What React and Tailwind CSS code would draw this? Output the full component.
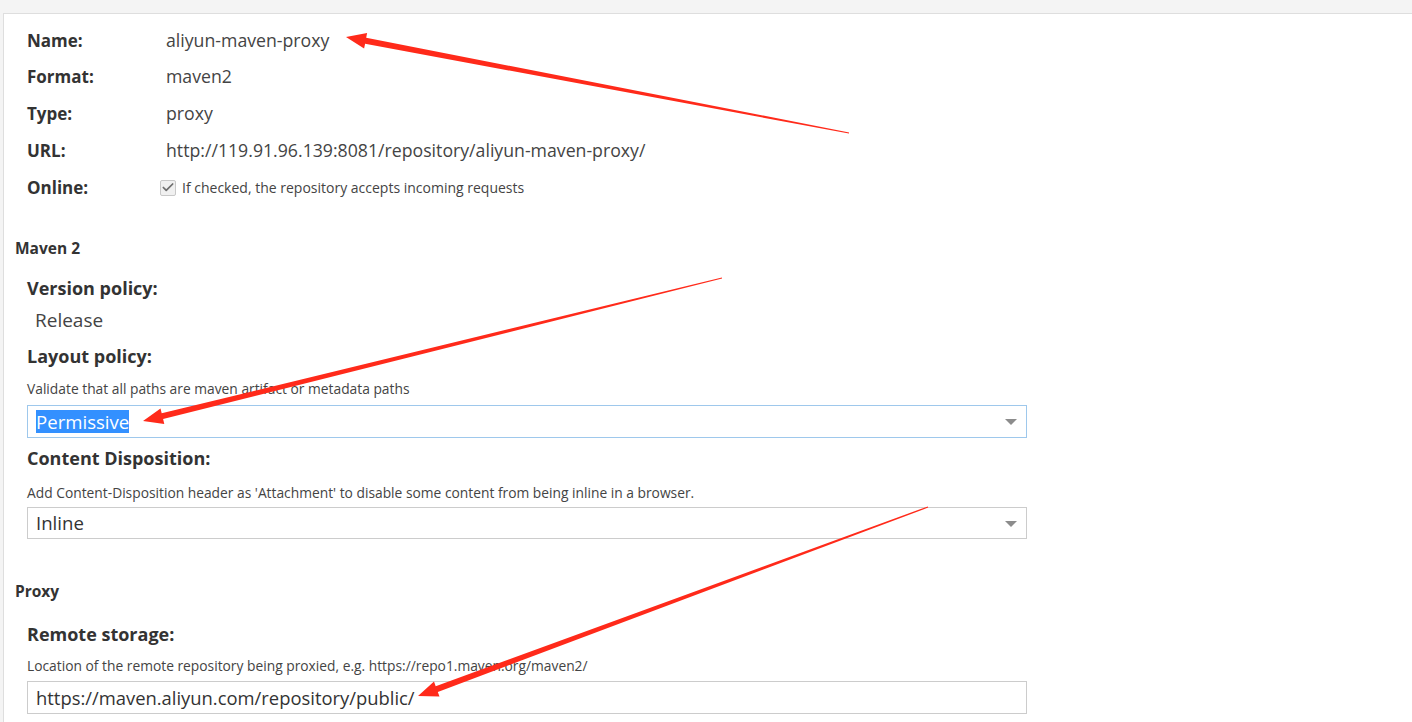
import { Check } from 'lucide-react';

const font = { fontFamily: '"Open Sans", Lato, sans-serif' };

// tapered arrow polygon, tail -> head
function arrowPoints(tx, ty, hx, hy) {
  const len = Math.hypot(hx - tx, hy - ty);
  const dx = (hx - tx) / len;
  const dy = (hy - ty) / len;
  const nx = -dy;
  const ny = dx;
  const headLen = 20;
  const bx = hx - dx * headLen;
  const by = hy - dy * headLen;
  const p = (x, y) => `${x.toFixed(1)},${y.toFixed(1)}`;
  return [
    p(tx + nx * 0.6, ty + ny * 0.6),
    p(bx + nx * 3, by + ny * 3),
    p(bx + nx * 8, by + ny * 8),
    p(hx, hy),
    p(bx - nx * 8, by - ny * 8),
    p(bx - nx * 3, by - ny * 3),
    p(tx - nx * 0.6, ty - ny * 0.6),
  ].join(' ');
}

function Fila({ label, children, h = 'h-[37px]' }) {
  return (
    <div className={`flex items-center ${h}`}>
      <div className="w-[139px] shrink-0 font-bold text-[17px] text-[#333]">{label}</div>
      <div className="text-[17.7px] text-[#444]">{children}</div>
    </div>
  );
}

function Caret() {
  return (
    <svg width="12" height="7" viewBox="0 0 12 7" className="absolute right-[9px] top-[13px]">
      <path d="M0 0 L12 0 L6 6 Z" fill="#8c8c8c" />
    </svg>
  );
}

export default function App() {
  return (
    <div className="relative w-[1412px] h-[722px] overflow-hidden bg-[#f4f4f4] pt-[13px] pl-[3px]" style={font}>
      <div className="h-full bg-white border-l border-t border-[#dedede] text-[#333]">
        {/* Genel bilgiler */}
        <div className="pl-[23px] pt-[9px]">
          <Fila label="Name:" h="h-[35px]">aliyun-maven-proxy</Fila>
          <Fila label="Format:">maven2</Fila>
          <Fila label="Type:">proxy</Fila>
          <Fila label="URL:">http://119.91.96.139:8081/repository/aliyun-maven-proxy/</Fila>
          <div className="flex items-center h-[37px]">
            <div className="w-[133px] shrink-0 font-bold text-[17px] text-[#333]">Online:</div>
            <div className="flex items-center gap-[6px]">
              <span className="w-[16px] h-[16px] rounded-[2px] border border-[#c8c8c8] bg-[#f0f0f0] flex items-center justify-center">
                <Check size={15} strokeWidth={3} className="text-[#6e6e6e]" />
              </span>
              <span className="text-[14px] text-[#444]">If checked, the repository accepts incoming requests</span>
            </div>
          </div>
        </div>

        {/* Maven 2 */}
        <div className="pl-[11px] mt-[32px] font-bold text-[15.5px] text-[#333] h-[20px] leading-[20px]">Maven 2</div>
        <div className="pl-[23px] pr-[385px]">
          <div className="mt-[20px] font-bold text-[18px] leading-[20px]">Version policy:</div>
          <div className="mt-[12px] pl-[8px] text-[19px] leading-[20px] text-[#444]">Release</div>
          <div className="mt-[16px] font-bold text-[18px] leading-[20px]">Layout policy:</div>
          <div className="mt-[14px] text-[13.8px] leading-[18px] text-[#444]">Validate that all paths are maven artifact or metadata paths</div>
          <div className="relative mt-[7px] h-[33px] border border-[#9ec8ec] flex items-center pl-[8px]">
            <span className="bg-[#3390ff] text-white text-[18.6px] leading-[23px]">Permissive</span>
            <Caret />
          </div>
          <div className="mt-[10px] font-bold text-[18px] leading-[20px]">Content Disposition:</div>
          <div className="mt-[16px] text-[13.8px] leading-[18px] text-[#444]">Add Content-Disposition header as 'Attachment' to disable some content from being inline in a browser.</div>
          <div className="relative mt-[5px] h-[32px] border border-[#cccccc] flex items-center pl-[8px]">
            <span className="text-[18.6px] text-[#333]">Inline</span>
            <Caret />
          </div>
        </div>

        {/* Proxy */}
        <div className="pl-[11px] mt-[42px] font-bold text-[15.5px] text-[#333] h-[20px] leading-[20px]">Proxy</div>
        <div className="pl-[23px] pr-[385px]">
          <div className="mt-[23px] font-bold text-[18px] leading-[20px]">Remote storage:</div>
          <div className="mt-[13px] text-[13.8px] leading-[18px] text-[#444]">Location of the remote repository being proxied, e.g. https://repo1.maven.org/maven2/</div>
          <div className="mt-[6px] h-[33px] border border-[#cccccc] flex items-center pl-[8px]">
            <span className="text-[18.4px] text-[#333]">https://maven.aliyun.com/repository/public/</span>
          </div>
        </div>
      </div>

      {/* kırmızı oklar */}
      <svg className="absolute inset-0 pointer-events-none" width="1412" height="722">
        <polygon points={arrowPoints(849, 133, 346, 37)} fill="#ff2a1a" />
        <polygon points={arrowPoints(722, 278, 143, 421)} fill="#ff2a1a" />
        <polygon points={arrowPoints(928, 507, 418, 696)} fill="#ff2a1a" />
      </svg>
    </div>
  );
}
